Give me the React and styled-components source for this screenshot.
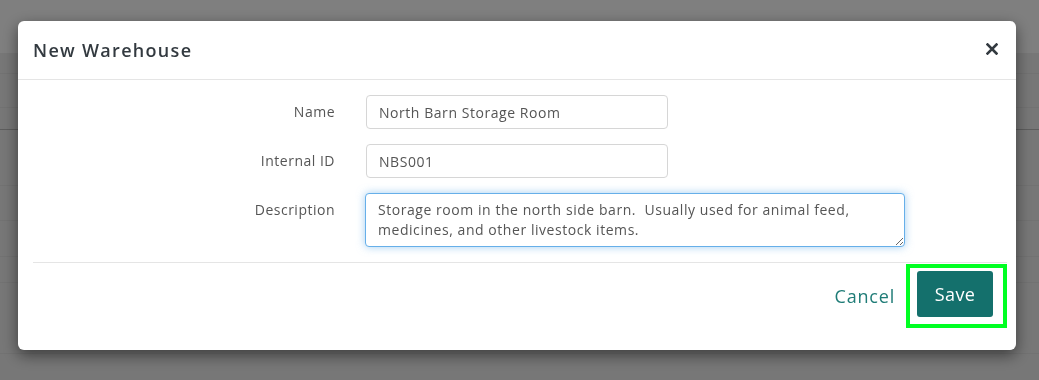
import React, { useState } from "react";
import styled, { createGlobalStyle } from "styled-components";

const GlobalStyle = createGlobalStyle`
    html, body {
        margin: 0;
        padding: 0;
        width: 1039px;
        height: 380px;
        overflow: hidden;
        font-family: "Open Sans", "Liberation Sans", sans-serif;
        background: #eeeeee;
    }
`

const App = () => {
    const [name, setName] = useState('North Barn Storage Room');
    const [internalId, setInternalId] = useState('NBS001');
    const [description, setDescription] = useState(
        'Storage room in the north side barn.  Usually used for animal feed, medicines, and other livestock items.'
    );

    return (
        <>
            <GlobalStyle />
            <Page>
                <TopBar />
                <Content>
                    <PageRow $height={20} />
                    <PageRow $height={33} />
                    <PageRow $height={21} $dark />
                    <PageRow $height={55} />
                    <PageRow $height={34} />
                    <PageRow $height={35} />
                    <PageRow $height={25} />
                    <PageRow $height={70} />
                </Content>
            </Page>

            <Backdrop>
                <Dialog>
                    <Header>
                        <Title>New Warehouse</Title>
                        <CloseButton aria-label="Close">
                            <svg width="12" height="12" viewBox="0 0 12 12">
                                <path d="M1.5 1.5 L10.5 10.5 M10.5 1.5 L1.5 10.5" stroke="#333a40" strokeWidth="2.6" strokeLinecap="square" />
                            </svg>
                        </CloseButton>
                    </Header>
                    <Body>
                        <FormRow>
                            <Label>Name</Label>
                            <Input $width={302} value={name} onChange={(e) => setName(e.target.value)} />
                        </FormRow>
                        <FormRow>
                            <Label>Internal ID</Label>
                            <Input $width={302} value={internalId} onChange={(e) => setInternalId(e.target.value)} />
                        </FormRow>
                        <FormRow>
                            <Label>Description</Label>
                            <TextArea value={description} onChange={(e) => setDescription(e.target.value)} />
                        </FormRow>
                        <Footer>
                            <CancelLink href="#">Cancel</CancelLink>
                            <Highlight>
                                <SaveButton>Save</SaveButton>
                            </Highlight>
                        </Footer>
                    </Body>
                </Dialog>
            </Backdrop>
        </>
    )
}

export default App;


const Page = styled.div`
    display: flex;
    flex-direction: column;
    height: 380px;
`

const TopBar = styled.div`
    height: 53px;
    background: #ffffff;
    box-shadow: 0 2px 6px rgba(0,0,0,0.25);
`

const Content = styled.div`
    flex: 1;
    display: flex;
    flex-direction: column;
    background: #eeeeee;
`

const PageRow = styled.div`
    height: ${p => p.$height}px;
    border-bottom: 1px solid ${p => p.$dark ? '#bbbbbb' : '#e4e4e4'};
`

const Backdrop = styled.div`
    position: fixed;
    inset: 0;
    background: rgba(0,0,0,0.5);
    display: flex;
    justify-content: center;
    align-items: flex-start;
    padding-top: 21px;
    padding-right: 23px;
    padding-left: 18px;
    box-sizing: border-box;
`

const Dialog = styled.div`
    width: 998px;
    height: 329px;
    background: #ffffff;
    border-radius: 6px;
    box-shadow: 0 5px 15px rgba(0,0,0,0.5);
    box-sizing: border-box;
    color: #555555;
`

const Header = styled.div`
    height: 58px;
    padding: 0 15px;
    display: flex;
    align-items: center;
    justify-content: space-between;
    border-bottom: 1px solid #e5e5e5;
`

const Title = styled.h4`
    margin: 0;
    font-size: 18px;
    font-weight: 600;
    color: #333a40;
    letter-spacing: 1.3px;
`

const CloseButton = styled.button`
    border: 0;
    background: none;
    padding: 0;
    margin-right: 3px;
    margin-top: -2px;
    display: flex;
    cursor: pointer;
`

const Body = styled.div`
    padding: 15px 15px 0;
`

const FormRow = styled.div`
    display: grid;
    grid-template-columns: 302px 1fr;
    column-gap: 31px;
    align-items: start;
    margin-bottom: 15px;
`

const Label = styled.label`
    text-align: right;
    font-size: 14px;
    color: #555555;
    padding-top: 7px;
    line-height: 20px;
    letter-spacing: 0.5px;
`

const Input = styled.input`
    width: ${p => p.$width}px;
    height: 34px;
    box-sizing: border-box;
    border: 1px solid #d6d6d6;
    border-radius: 4px;
    padding: 6px 12px;
    font-family: inherit;
    font-size: 14px;
    letter-spacing: 0.55px;
    color: #555555;
    outline: none;
`

const TextArea = styled.textarea`
    width: 540px;
    height: 54px;
    box-sizing: border-box;
    border: 1px solid #66afe9;
    border-radius: 4px;
    padding: 6px 12px;
    font-family: inherit;
    font-size: 14px;
    letter-spacing: 0.55px;
    line-height: 20px;
    color: #555555;
    outline: none;
    box-shadow: 0 0 8px rgba(102,175,233,0.6);
    margin-left: -1px;
`

const Footer = styled.div`
    border-top: 1px solid #e5e5e5;
    display: flex;
    justify-content: flex-end;
    align-items: center;
    gap: 11px;
    padding-top: 1px;
    margin-right: -6px;
`

const CancelLink = styled.a`
    color: #1f7c77;
    font-size: 18px;
    letter-spacing: 0.8px;
    text-decoration: none;
`

const Highlight = styled.div`
    border: 4px solid #00ff22;
    padding: 3px 10px 7px 7px;
`

const SaveButton = styled.button`
    display: block;
    width: 76px;
    height: 46px;
    border: 0;
    border-radius: 3px;
    background: #14706c;
    color: #ffffff;
    font-family: inherit;
    font-size: 18px;
    letter-spacing: 0.4px;
    cursor: pointer;
`
